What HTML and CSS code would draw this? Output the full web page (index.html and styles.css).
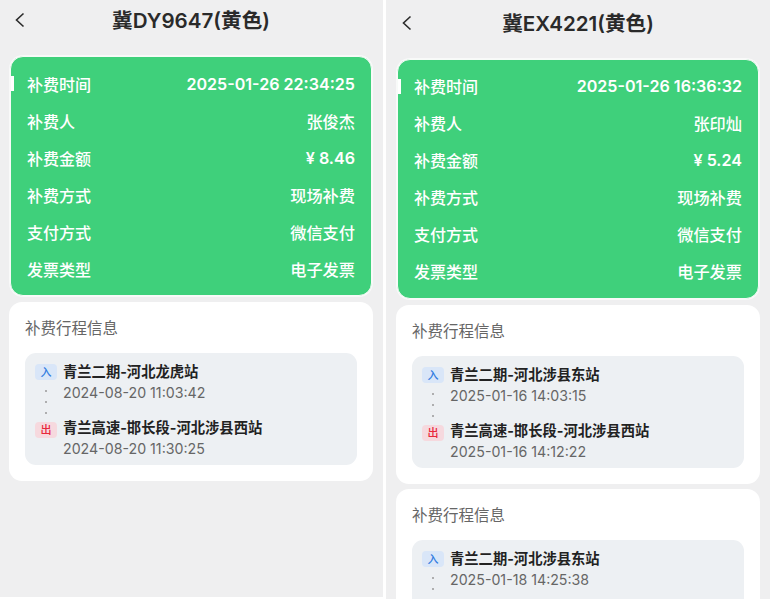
FILE: index.html
```html
<!DOCTYPE html>
<html lang="zh-CN">
<head>
<meta charset="utf-8">
<title>补费详情</title>
<link rel="stylesheet" href="styles.css">
</head>
<body>
<main class="page">
  <section class="panel panel-left">
    <header class="topbar">
      <svg class="back" viewBox="0 0 12 16" width="12" height="16"><path d="M10.5 1.5 L3.5 8 L10.5 14.5" fill="none" stroke="#2b2b2b" stroke-width="1.6"/></svg>
      <h1 class="title">冀DY9647(黄色)</h1>
    </header>
    <div class="summary">
      <span class="notch"></span>
      <div class="row"><span>补费时间</span><span class="num">2025-01-26 22:34:25</span></div>
      <div class="row"><span>补费人</span><span class="val">张俊杰</span></div>
      <div class="row"><span>补费金额</span><span class="num">¥ 8.46</span></div>
      <div class="row"><span>补费方式</span><span class="val">现场补费</span></div>
      <div class="row"><span>支付方式</span><span class="val">微信支付</span></div>
      <div class="row"><span>发票类型</span><span class="val">电子发票</span></div>
    </div>
    <article class="trip">
      <h2 class="trip-title">补费行程信息</h2>
      <div class="route">
        <div class="stop"><span class="badge badge-in">入</span><div class="stop-body"><p class="station">青兰二期-河北龙虎站</p><p class="time">2024-08-20 11:03:42</p></div></div>
        <div class="dots"><i></i><i></i><i></i></div>
        <div class="stop"><span class="badge badge-out">出</span><div class="stop-body"><p class="station">青兰高速-邯长段-河北涉县西站</p><p class="time">2024-08-20 11:30:25</p></div></div>
      </div>
    </article>
  </section>
  <section class="panel panel-right">
    <header class="topbar">
      <svg class="back" viewBox="0 0 12 16" width="12" height="16"><path d="M10.5 1.5 L3.5 8 L10.5 14.5" fill="none" stroke="#2b2b2b" stroke-width="1.6"/></svg>
      <h1 class="title">冀EX4221(黄色)</h1>
    </header>
    <div class="summary">
      <span class="notch"></span>
      <div class="row"><span>补费时间</span><span class="num">2025-01-26 16:36:32</span></div>
      <div class="row"><span>补费人</span><span class="val">张印灿</span></div>
      <div class="row"><span>补费金额</span><span class="num">¥ 5.24</span></div>
      <div class="row"><span>补费方式</span><span class="val">现场补费</span></div>
      <div class="row"><span>支付方式</span><span class="val">微信支付</span></div>
      <div class="row"><span>发票类型</span><span class="val">电子发票</span></div>
    </div>
    <article class="trip">
      <h2 class="trip-title">补费行程信息</h2>
      <div class="route">
        <div class="stop"><span class="badge badge-in">入</span><div class="stop-body"><p class="station">青兰二期-河北涉县东站</p><p class="time">2025-01-16 14:03:15</p></div></div>
        <div class="dots"><i></i><i></i><i></i></div>
        <div class="stop"><span class="badge badge-out">出</span><div class="stop-body"><p class="station">青兰高速-邯长段-河北涉县西站</p><p class="time">2025-01-16 14:12:22</p></div></div>
      </div>
    </article>
    <article class="trip">
      <h2 class="trip-title">补费行程信息</h2>
      <div class="route">
        <div class="stop"><span class="badge badge-in">入</span><div class="stop-body"><p class="station">青兰二期-河北涉县东站</p><p class="time">2025-01-18 14:25:38</p></div></div>
        <div class="dots"><i></i><i></i><i></i></div>
      </div>
    </article>
  </section>
</main>
</body>
</html>
```
FILE: styles.css
```css
* { box-sizing: border-box; }
html, body { margin: 0; height: 100%; background: #fff; overflow: hidden; }
body { font-family: "Inter", "Noto Sans CJK SC", sans-serif; }
.page { display: flex; gap: 3px; height: 599px; }
.panel { background: #efeff0; overflow: hidden; display: flex; flex-direction: column; gap: 5px; flex: none; }
.panel-left { width: 383px; height: 597px; padding: 0 10px 0 9px; }
.panel-right { width: 384px; height: 599px; padding: 3px 10px 0; }
.topbar { height: 51px; display: flex; justify-content: center; position: relative; padding-top: 7px; flex: none; }
.back { position: absolute; left: 4px; top: 12px; }
.title { margin: 0; font-size: 20.6px; line-height: 28px; font-weight: 600; color: #2a2a2a; }
.summary { position: relative; flex: none; height: 240px; margin: 0 0 1px 1px; width: 362px; border: 1px solid #f7fbf8; border-radius: 13px; box-shadow: 0 0 0 1px rgba(255, 255, 255, 0.6); background: #3fd07b; padding: 8.5px 16px 0; }
.panel-right .summary { padding-top: 7.5px; }
.notch { position: absolute; left: 0; top: 19px; width: 3px; height: 15px; background: #fff; }
.row { height: 37px; display: flex; justify-content: space-between; align-items: center; color: #fff; font-size: 16px; font-weight: 500; }
.val { font-size: 16.2px; }
.num { font-weight: 600; font-size: 16.1px; }
.trip { flex: none; background: #fff; border-radius: 13px; padding: 15px 16px 16px; }
.trip-title { margin: 0 0 12px; font-size: 15.5px; line-height: 24px; font-weight: 400; color: #666; }
.route { background: #edf0f3; border-radius: 11px; padding: 9px 10px 5px; }
.stop { display: flex; gap: 6px; }
.badge { flex: none; width: 22px; height: 16px; margin-top: 2px; border-radius: 4px; font-size: 11px; line-height: 16px; text-align: center; font-weight: 500; }
.badge-in { background: #d9e6f8; color: #2f7be0; }
.badge-out { background: #f6d9de; color: #e8283c; margin-top: 4px; }
.stop-body { display: flex; flex-direction: column; }
.station { margin: 0; font-size: 14.3px; line-height: 20px; font-weight: 700; color: #222; }
.time { margin: 0; font-size: 14.2px; line-height: 22px; color: #666; }
.dots { height: 14px; position: relative; }
.dots i { position: absolute; left: 10px; width: 2px; height: 2px; background: #999; border-radius: 50%; }
.dots i:nth-child(1) { top: -14px; }
.dots i:nth-child(2) { top: -3px; }
.dots i:nth-child(3) { top: 8px; }
```
